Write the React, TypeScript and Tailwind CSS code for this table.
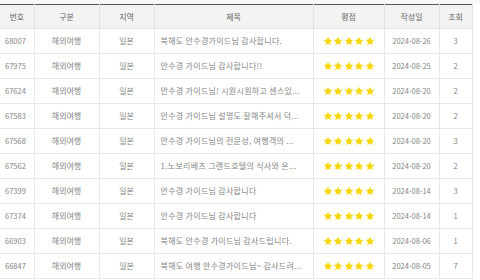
import React from "react";

type Review = {
  no: string;
  title: string;
  date: string;
  views: string;
};

const reviews: Review[] = [
  { no: "68007", title: "북해도 안수경가이드님 감사합니다.", date: "2024-08-26", views: "3" },
  { no: "67975", title: "안수경 가이드님 감사합니다!!", date: "2024-08-25", views: "2" },
  { no: "67624", title: "안수경 가이드님! 시원시원하고 센스있...", date: "2024-08-20", views: "2" },
  { no: "67583", title: "안수경 가이드님 설명도 잘해주셔서 덕...", date: "2024-08-20", views: "2" },
  { no: "67568", title: "안수경 가이드님의 전문성, 여행객의 ...", date: "2024-08-20", views: "3" },
  { no: "67562", title: "1.노보리베츠 그랜드호텔의 식사와 온...", date: "2024-08-20", views: "2" },
  { no: "67399", title: "안수경 가이드님 감사합니다", date: "2024-08-14", views: "3" },
  { no: "67374", title: "안수경 가이드님 감사합니다", date: "2024-08-14", views: "1" },
  { no: "66903", title: "북해도 안수경 가이드님 감사드립니다.", date: "2024-08-06", views: "1" },
  { no: "66847", title: "북해도 여행 안수경가이드님~ 감사드려...", date: "2024-08-05", views: "7" },
];

const Star = () => (
  <svg viewBox="0 0 24 24" className="h-[10px] w-[10px]">
    <path
      d="M12 1.8l3.1 6.6 7.2.9-5.3 5 1.4 7.1L12 17.9l-6.4 3.5 1.4-7.1-5.3-5 7.2-.9z"
      fill="#f7d708"
    />
  </svg>
);

const Stars = () => (
  <div className="flex items-center justify-center gap-[0.5px]">
    {[0, 1, 2, 3, 4].map((i) => (
      <Star key={i} />
    ))}
  </div>
);

const App = () => {
  return (
    <div className="h-[280px] w-[480px] overflow-hidden bg-white pt-[4px] font-['Noto_Sans_CJK_KR','Noto_Sans',sans-serif] text-[8px] text-[#858585]">
      <div className="h-[4px] -mt-[4px] bg-[#f8f8f8]" />
      <table className="w-[472px] table-fixed border-collapse border-t border-t-[#555]">
        <colgroup>
          <col className="w-[34px]" />
          <col className="w-[65px]" />
          <col className="w-[55px]" />
          <col className="w-[159px]" />
          <col className="w-[71px]" />
          <col className="w-[55px]" />
          <col className="w-[33px]" />
        </colgroup>
        <thead>
          <tr className="h-[24px] bg-[#f3f3f3] text-[#666]">
            {["번호", "구분", "지역", "제목", "평점", "작성일", "조회"].map((h) => (
              <th key={h} className="border-b border-r border-[#e3e3e3] font-normal">
                {h}
              </th>
            ))}
          </tr>
        </thead>
        <tbody>
          {reviews.map((r) => (
            <tr key={r.no} className="h-[25px]">
              <td className="border-b border-r border-[#e8e8e8] pl-[5px] text-[7.5px]">{r.no}</td>
              <td className="border-b border-r border-[#e8e8e8] text-center">해외여행</td>
              <td className="border-b border-r border-[#e8e8e8] text-center">일본</td>
              <td className="truncate border-b border-r border-[#e8e8e8] pl-[6px] tracking-[0.3px]">{r.title}</td>
              <td className="border-b border-r border-[#e8e8e8]">
                <Stars />
              </td>
              <td className="border-b border-r border-[#e8e8e8] text-center text-[7.5px]">{r.date}</td>
              <td className="border-b border-r border-[#e8e8e8] text-center text-[7.5px]">{r.views}</td>
            </tr>
          ))}
        </tbody>
      </table>
    </div>
  );
};

export default App;
